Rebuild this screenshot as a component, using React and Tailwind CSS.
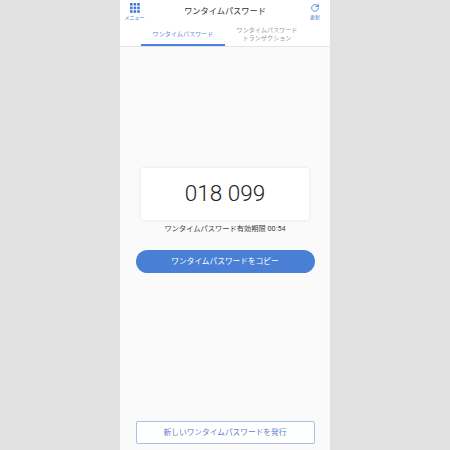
const FONT = "font-['Roboto','Noto_Sans_CJK_JP',sans-serif]";

const GridIcon = () => (
  <svg width="10" height="10" viewBox="0 0 10 10" fill="#3f7bd4">
    {[0, 3.6, 7.2].map(y =>
      [0, 3.6, 7.2].map(x => <rect key={`${x}-${y}`} x={x} y={y} width="2.6" height="2.6" />)
    )}
  </svg>
);

const RefreshIcon = () => (
  <svg width="10" height="10" viewBox="0 0 24 24" fill="none" stroke="#3f7bd4" strokeWidth="2" strokeLinecap="round" strokeLinejoin="round">
    <path d="M20 12a8 8 0 1 1-2.6-5.9L20 8.5" />
    <path d="M20 3v5.5h-5.5" />
  </svg>
);

export default function App() {
  return (
    <div className={`${FONT} w-[450px] h-[450px] bg-[#e2e2e2] flex justify-center overflow-hidden`}>
      <div className="w-[210px] h-[450px] bg-[#fafafa] flex flex-col">
        <header className="bg-white h-[47px] shrink-0 border-b border-[#e4e4e4] flex flex-col">
          <div className="h-[24px] flex items-start justify-between pl-[4px] pr-[10px] pt-[3px]">
            <div className="w-[21px] flex flex-col items-center">
              <GridIcon />
              <span className="text-[5px] leading-[7px] text-[#3f7bd4] mt-[1px]">メニュー</span>
            </div>
            <h1 className="text-[8.2px] leading-[14px] text-[#333] mt-[1px] mr-[5px]">ワンタイムパスワード</h1>
            <div className="w-[10px] flex flex-col items-center">
              <RefreshIcon />
              <span className="text-[5px] leading-[7px] text-[#3f7bd4] mt-[1px]">更新</span>
            </div>
          </div>
          <div className="flex-1 flex px-[21px]">
            <div className="w-[84px] flex items-center justify-center border-b-2 border-[#4a80d6] text-[6.1px] text-[#5b8bd8] h-[23px]">
              ワンタイムパスワード
            </div>
            <div className="w-[84px] flex items-center justify-center text-center text-[6.1px] leading-[8px] text-[#9a9a9a] h-[22px]">
              ワンタイムパスワード<br />トランザクション
            </div>
          </div>
        </header>

        <main className="flex-1 flex flex-col items-center pt-[121px]">
          <div className="w-[168px] h-[52px] bg-white rounded-[2px] shadow-[0_0_3px_rgba(0,0,0,0.1)] flex items-center justify-center text-[22.5px] font-light text-[#222]">
            018 099
          </div>
          <p className="text-[7.25px] leading-[10px] text-[#444] mt-[4px]">ワンタイムパスワード有効期限 00:54</p>
          <button className="w-[179px] h-[23px] mt-[16px] rounded-full bg-[#4a7fd6] text-white text-[7.7px] flex items-center justify-center">
            ワンタイムパスワードをコピー
          </button>
        </main>

        <div className="flex justify-center pb-[6px]">
          <button className="w-[179px] h-[23px] rounded-[2px] bg-white border border-[#a9c0ea] text-[#5b83c8] text-[7.7px] flex items-center justify-center">
            新しいワンタイムパスワードを発行
          </button>
        </div>
      </div>
    </div>
  );
}
